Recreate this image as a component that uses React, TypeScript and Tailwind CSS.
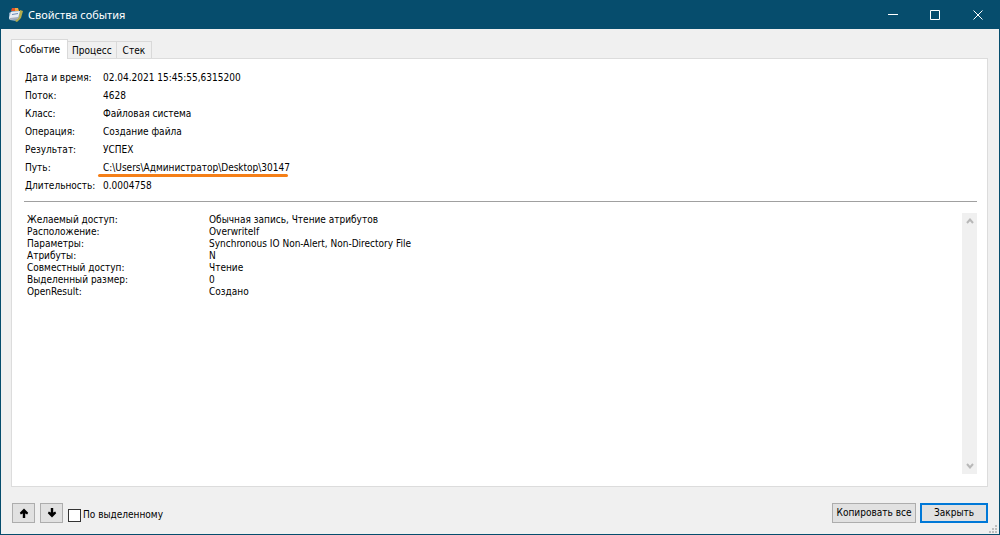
import { useState } from "react";

const tabs = ["Событие", "Процесс", "Стек"];

const fields = [
  ["Дата и время:", "02.04.2021 15:45:55,6315200"],
  ["Поток:", "4628"],
  ["Класс:", "Файловая система"],
  ["Операция:", "Создание файла"],
  ["Результат:", "УСПЕХ"],
  ["Путь:", "C:\\Users\\Администратор\\Desktop\\30147"],
  ["Длительность:", "0.0004758"],
];

const details = [
  ["Желаемый доступ:", "Обычная запись, Чтение атрибутов"],
  ["Расположение:", "OverwriteIf"],
  ["Параметры:", "Synchronous IO Non-Alert, Non-Directory File"],
  ["Атрибуты:", "N"],
  ["Совместный доступ:", "Чтение"],
  ["Выделенный размер:", "0"],
  ["OpenResult:", "Создано"],
];

function AppIcon() {
  return (
    <svg width="16" height="16" viewBox="0 0 16 16" aria-hidden="true">
      <path d="M1 6l3-2h9l1 1-3 8-4 1-5-1-1-3z" fill="#7fa3bf" />
      <path d="M12 3l3 1-2 7-4 4-2-1 4-4z" fill="#b5ad4c" />
      <path d="M4 1h4v3H3z" fill="#e0522c" />
      <path d="M7 1h3l1 3H7z" fill="#f0a83c" />
      <path d="M3 5l9-1-2 7-8 2-1-2z" fill="#e8edf4" />
      <path d="M4 7l6-1v1l-6 1z" fill="#6a88b4" />
      <path d="M2 11l8-1v2l-8 1z" fill="#a7adba" />
    </svg>
  );
}

function ArrowIcon({ down = false }: { down?: boolean }) {
  return (
    <svg width="10" height="10" viewBox="0 0 10 10" aria-hidden="true">
      <path
        d={
          down
            ? "M3.800 0h2.400v4.500l2-1 1 1.700L5 9.500.8 5.200l1-1.700 2 1z"
            : "M3.800 10h2.400V5.500l2 1 1-1.700L5 .5.8 4.800l1 1.700 2-1z"
        }
        fill="#000"
      />
    </svg>
  );
}

function ScrollChevron({ down = false }: { down?: boolean }) {
  return (
    <svg width="8" height="6" viewBox="0 0 8 6" aria-hidden="true">
      <path d={down ? "M1 1L4 4.500L7 1" : "M1 5L4 1.500L7 5"} fill="none" stroke="#b8b8b8" strokeWidth="2" />
    </svg>
  );
}

export default function App() {
  const [active, setActive] = useState(0);
  return (
    <div className="flex min-h-screen flex-col border-x border-b border-[#064d6d] bg-[#f0f0f0] font-['DejaVu_Sans_Condensed','DejaVu_Sans',sans-serif] text-[10px] leading-3 text-black">
      <header className="flex h-[29px] shrink-0 items-center bg-[#064d6d] pl-[7px] font-['Noto_Sans',sans-serif] text-[11px] text-white">
        <AppIcon />
        <h1 className="ml-1 flex-1">Свойства события</h1>
        <button aria-label="Свернуть" className="flex h-full w-[42px] items-center justify-center">
          <svg width="10" height="10" viewBox="0 0 10 10"><path d="M0 4.500h10" stroke="#fff" /></svg>
        </button>
        <button aria-label="Развернуть" className="flex h-full w-[42px] items-center justify-center">
          <svg width="10" height="10" viewBox="0 0 10 10"><path d="M.5.5h9v9h-9z" fill="none" stroke="#fff" /></svg>
        </button>
        <button aria-label="Закрыть окно" className="flex h-full w-[43px] items-center justify-center">
          <svg width="10" height="10" viewBox="0 0 10 10"><path d="M.5.5l9 9M9.500.5l-9 9" stroke="#fff" /></svg>
        </button>
      </header>

      <main className="flex flex-1 flex-col pt-[10px] pr-[11px] pl-[10px]">
        <div role="tablist" className="flex items-end">
          {tabs.map((tab, i) => (
            <button
              key={tab}
              role="tab"
              aria-selected={i === active}
              onClick={() => setActive(i)}
              className={
                i === active
                  ? "relative -mb-px h-[20px] border border-b-0 border-[#d9d9d9] bg-white px-[7px]"
                  : "h-[17px] border border-l-0 border-b-0 border-[#d9d9d9] px-[4px] pt-px last:px-[6px]"
              }
            >
              {tab}
            </button>
          ))}
        </div>

        <section role="tabpanel" className="flex flex-1 flex-col border border-[#dcdcdc] bg-white px-[10px] pt-[10px] pb-[12px] pl-[12px]">
          <dl className="ml-px">
            {fields.map(([label, value]) => (
              <div key={label} className="flex h-[18px] items-center">
                <dt className="w-[78px] whitespace-nowrap">{label}</dt>
                <dd className="relative">
                  {value}
                  {label === "Путь:" && (
                    <span className="absolute right-[2px] -bottom-[3px] -left-[5px] h-[3px] rounded-full bg-[#f57f17]" />
                  )}
                </dd>
              </div>
            ))}
          </dl>
          <hr className="mt-[6px] border-[#a0a0a0]" />
          <div className="mt-[11px] flex flex-1">
            <table className="w-full self-start">
              <tbody>
                {details.map(([label, value]) => (
                  <tr key={label}>
                    <th scope="row" className="w-[185px] p-0 pt-px pl-[3px] text-left leading-[11px] font-normal">{label}</th>
                    <td className="p-0 pt-px leading-[11px]">{value}</td>
                  </tr>
                ))}
              </tbody>
            </table>
            <div className="flex w-[15px] shrink-0 flex-col items-center justify-between bg-[#f0f0f0] py-[5px]">
              <ScrollChevron />
              <ScrollChevron down />
            </div>
          </div>
        </section>
      </main>

      <footer className="relative flex items-center pt-[16px] pr-[11px] pb-[11px] pl-[11px]">
        <button aria-label="Предыдущее событие" className="flex h-[20px] w-[23px] items-center justify-center border border-[#adadad] bg-[#e1e1e1]">
          <ArrowIcon />
        </button>
        <button aria-label="Следующее событие" className="ml-[5px] flex h-[20px] w-[23px] items-center justify-center border border-[#adadad] bg-[#e1e1e1]">
          <ArrowIcon down />
        </button>
        <label className="ml-[5px] flex items-center gap-[2px] pt-[4px]">
          <input type="checkbox" className="size-[13px] appearance-none border border-[#333] bg-white checked:bg-[#0078d7]" />
          По выделенному
        </label>
        <button className="ml-auto h-[20px] w-[84px] border border-[#adadad] bg-[#e1e1e1] whitespace-nowrap">Копировать все</button>
        <button className="ml-[4px] h-[20px] w-[68px] border-2 border-[#0078d7] bg-[#e1e1e1]">Закрыть</button>
        <svg className="absolute right-[2px] bottom-px" width="9" height="9" viewBox="0 0 9 9" aria-hidden="true">
          <path d="M7 1h2v2H7zM4 4h2v2H4zM7 4h2v2H7zM1 7h2v2H1zM4 7h2v2H4zM7 7h2v2H7z" fill="#bfbfbf" />
        </svg>
      </footer>
    </div>
  );
}
